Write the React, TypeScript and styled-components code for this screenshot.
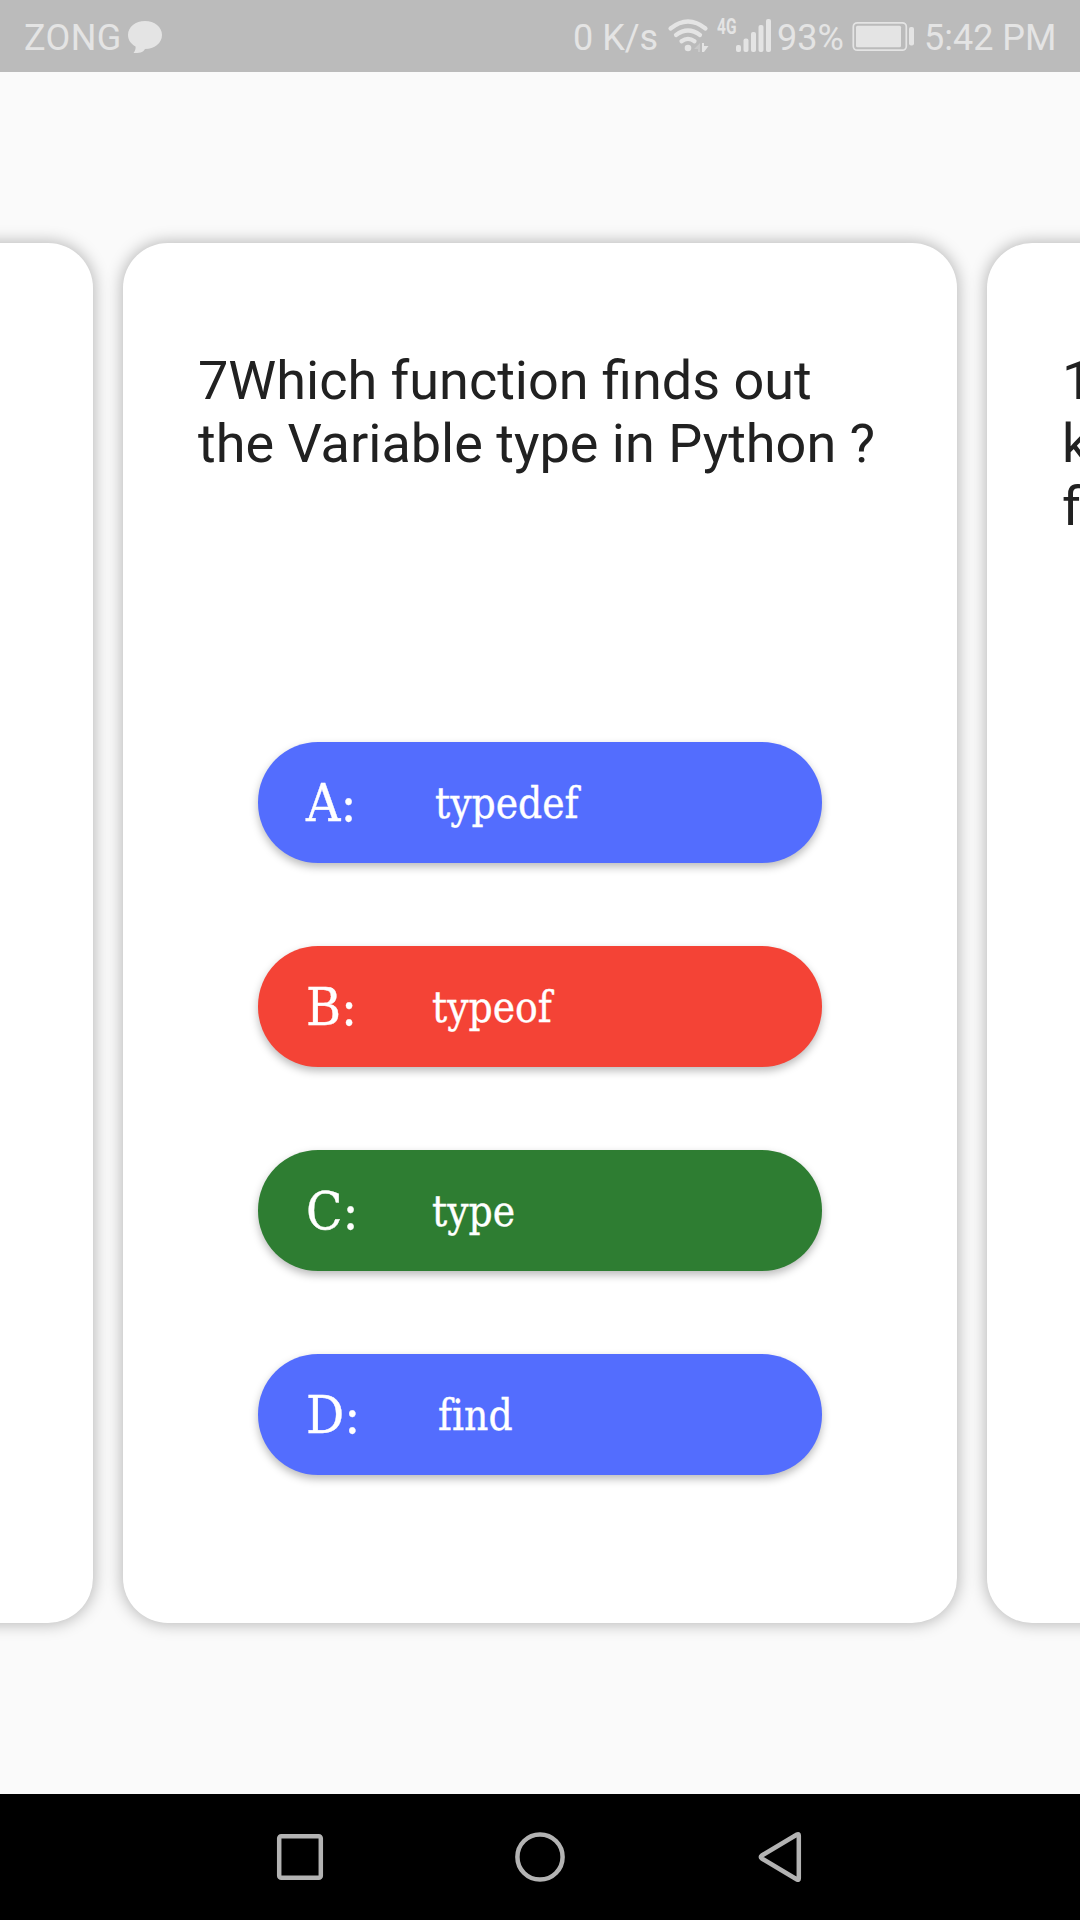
import React from "react";
import styled, { createGlobalStyle } from "styled-components";

const GlobalStyle = createGlobalStyle`
  * { box-sizing: border-box; }
  body { margin: 0; background: #fafafa; }
`;

const Screen = styled.div`
  width: 1080px;
  height: 1920px;
  display: flex;
  flex-direction: column;
  overflow: hidden;
  background: #fafafa;
  font-family: Roboto, "Liberation Sans", sans-serif;
`;

const StatusBar = styled.header`
  flex: none;
  height: 72px;
  display: flex;
  align-items: flex-start;
  justify-content: space-between;
  background: #bbbbbb;
  color: #e4e4e4;
`;

const StatusGroup = styled.div`
  display: flex;
  align-items: flex-start;
`;

const StatusText = styled.span<{ $width: number; $indent?: number; $tracking?: number }>`
  width: ${(p) => p.$width}px;
  padding: 17px 0 0 ${(p) => p.$indent ?? 0}px;
  font-size: 36px;
  line-height: 42px;
  letter-spacing: ${(p) => p.$tracking ?? 0}px;
  white-space: nowrap;
`;

const NetworkType = styled.span`
  width: 19px;
  padding-top: 15px;
  font-size: 21.5px;
  line-height: 24px;
  font-weight: 700;
  white-space: nowrap;
  transform: scaleX(0.72);
  transform-origin: left;
`;

const StatusIcon = styled.svg`
  flex: none;
  display: block;
  height: 72px;
`;

const Deck = styled.main`
  flex: 1;
  display: flex;
  justify-content: center;
  gap: 30px;
  padding: 171px 0;
  overflow: hidden;
`;

const Card = styled.section`
  flex: none;
  width: 834px;
  display: flex;
  flex-direction: column;
  align-items: center;
  padding: 106px 75px 0;
  border-radius: 45px;
  background: #ffffff;
  box-shadow: 0 0 15px 2px rgba(0, 0, 0, 0.25);
`;

const Question = styled.h1`
  width: 100%;
  height: 393.4px;
  margin: 0;
  color: #212121;
  font-size: 54px;
  font-weight: 400;
  line-height: 63px;
  white-space: pre;
`;

const Options = styled.div`
  display: flex;
  flex-direction: column;
  gap: 84px;
`;

const OptionButton = styled.button<{ $color: string }>`
  width: 564px;
  height: 120.5px;
  margin-bottom: -0.5px;
  display: flex;
  align-items: baseline;
  padding: 28px 0 0 48px;
  border: 0;
  border-radius: 60px;
  background: ${(p) => p.$color};
  box-shadow: 0 4px 8px rgba(0, 0, 0, 0.27);
  color: #ffffff;
  font-family: "DejaVu Serif Condensed", "DejaVu Serif", serif;
  font-stretch: condensed;
  font-variant-ligatures: none;
  text-align: left;
  -webkit-text-stroke: 0.35px #ffffff;
`;

const OptionLetter = styled.span<{ $width: number }>`
  width: ${(p) => p.$width}px;
  font-size: 53px;
  line-height: 66px;
`;

const OptionText = styled.span`
  font-size: 42px;
  line-height: 56px;
  position: relative;
  top: -3px;
`;

const NavBar = styled.nav`
  flex: none;
  height: 126px;
  display: flex;
  justify-content: center;
  gap: 180px;
  background: #000000;
`;

const NavIcon = styled.svg`
  display: block;
  width: 60px;
  height: 126px;
  fill: none;
  stroke: #b3b3b3;
  stroke-width: 4.5;
  stroke-linejoin: round;
`;

const BLUE = "#536dfe";
const RED = "#f44336";
const GREEN = "#2e7d32";

const options = [
  { letter: "A", text: "typedef", color: BLUE, width: 129 },
  { letter: "B", text: "typeof", color: RED, width: 126 },
  { letter: "C", text: "type", color: GREEN, width: 126 },
  { letter: "D", text: "find", color: BLUE, width: 132 },
];

function ChatIcon() {
  return (
    <StatusIcon width="40" viewBox="124 0 40 72" fill="currentColor">
      <path d="M145 21c9.500 0 17 6 17 14s-7.500 14-17 14c-2 4-6 4-11.500 4 1.500-2 2.500-4.500 2-6.500-4.500-2.500-7.500-6.500-7.500-11.500 0-8 7.500-14 17-14z" />
    </StatusIcon>
  );
}

function WifiIcon() {
  return (
    <StatusIcon width="51" viewBox="666 0 51 72" fill="none" stroke="currentColor" strokeWidth="4.200" strokeLinecap="round">
      <path d="M670.500 28.500Q688 14.500 705.500 28.500M676 35Q688 26 700 35M681.500 41.300Q688 36.500 694.500 41.300" />
      <g fill="currentColor" stroke="none">
        <circle cx="688" cy="48" r="3.300" />
        <path d="M700 43v9h-2v-3h-4z" opacity=".35" />
        <path d="M702 43h2v3h4.500l-4.500 6h-2z" />
      </g>
    </StatusIcon>
  );
}

function SignalIcon() {
  return (
    <StatusIcon width="41" viewBox="736 0 41 72" fill="currentColor">
      <rect x="736" y="45" width="5" height="7" rx="2" />
      <rect x="743.500" y="38.500" width="5" height="13.500" rx="2" />
      <rect x="751" y="32" width="5" height="20" rx="2" />
      <rect x="758.500" y="25" width="5" height="27" rx="2" />
      <rect x="766" y="19" width="5" height="33" rx="2" />
    </StatusIcon>
  );
}

function BatteryIcon() {
  return (
    <StatusIcon width="73" viewBox="851 0 73 72" fill="currentColor">
      <rect x="853.300" y="22.800" width="53" height="27.400" rx="4" fill="none" stroke="currentColor" strokeWidth="1.700" />
      <rect x="856" y="25.800" width="45" height="21.400" rx="1.500" />
      <rect x="909" y="27" width="5" height="18.500" rx="2" />
    </StatusIcon>
  );
}

export default function App() {
  return (
    <Screen>
      <GlobalStyle />
      <StatusBar>
        <StatusGroup>
          <StatusText $width={124} $indent={24} $tracking={0.4}>ZONG</StatusText>
          <ChatIcon />
        </StatusGroup>
        <StatusGroup>
          <StatusText $width={94} $indent={1}>0 K/s</StatusText>
          <WifiIcon />
          <NetworkType>4G</NetworkType>
          <SignalIcon />
          <StatusText $width={74}>93%</StatusText>
          <BatteryIcon />
          <StatusText $width={156}>5:42 PM</StatusText>
        </StatusGroup>
      </StatusBar>
      <Deck>
        <Card />
        <Card>
          <Question>{"7Which function finds out\nthe Variable type in Python ?"}</Question>
          <Options>
            {options.map((o) => (
              <OptionButton key={o.letter} $color={o.color}>
                <OptionLetter $width={o.width}>{o.letter}:</OptionLetter>
                <OptionText>{o.text}</OptionText>
              </OptionButton>
            ))}
          </Options>
        </Card>
        <Card>
          <Question>{"1\nk\nf"}</Question>
        </Card>
      </Deck>
      <NavBar>
        <NavIcon viewBox="0 0 60 126">
          <rect x="9.200" y="42.200" width="41.600" height="41.600" rx="2" />
        </NavIcon>
        <NavIcon viewBox="0 0 60 126">
          <circle cx="30" cy="63" r="22.600" />
        </NavIcon>
        <NavIcon viewBox="0 0 60 126">
          <path d="M48.800 41.500Q48.800 39.500 47 40.500L11.800 61.500Q9.800 63 11.800 64.500L47 85.500Q48.800 86.500 48.800 84.500Z" />
        </NavIcon>
      </NavBar>
    </Screen>
  );
}
